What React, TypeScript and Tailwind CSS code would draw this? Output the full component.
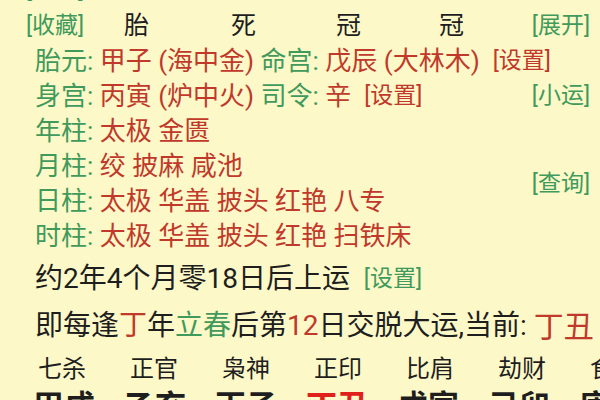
import React from "react";

const G = "text-[#3f9a5c]";
const R = "text-[#c0392b]";

export default function App() {
  return (
    <div className="w-[600px] h-[400px] overflow-hidden bg-[#fcf8c8] text-[#1e1e1e] font-['Roboto','Noto_Sans_CJK_SC',sans-serif]">
      <div className="-mt-[28px]">
        {/* row0 */}
        <div className={`h-[36px] flex items-center pl-[26px] text-[23px] ${G}`}>[删除]</div>
        {/* row1 */}
        <div className="h-[36px] flex items-center text-[25px]">
          <span className={`pl-[26px] w-[124px] text-[23px] ${G}`}>[收藏]</span>
          <span className="w-[107px]">胎</span>
          <span className="w-[105px]">死</span>
          <span className="w-[103px]">冠</span>
          <span className="flex-1">冠</span>
          <span className={`pr-[10px] text-[23px] ${G}`}>[展开]</span>
        </div>
        {/* row2 */}
        <div className="h-[35px] flex items-center pl-[35px] text-[26px] whitespace-pre">
          <span className={G}>胎元: </span>
          <span className={R}>甲子 (海中金) </span>
          <span className={G}>命宫: </span>
          <span className={R}>戊辰 (大林木)  </span>
          <span className={`text-[23px] ${R}`}>[设置]</span>
        </div>
        {/* row3 */}
        <div className="h-[35px] flex items-center pl-[35px] text-[26px] whitespace-pre">
          <span className={G}>身宫: </span>
          <span className={R}>丙寅 (炉中火) </span>
          <span className={G}>司令: </span>
          <span className={R}>辛  </span>
          <span className={`text-[23px] ${R}`}>[设置]</span>
          <span className="flex-1" />
          <span className={`pr-[10px] text-[23px] ${G}`}>[小运]</span>
        </div>
        {/* rows 4-7 */}
        <div className="flex">
          <div className="flex-1 pl-[35px] text-[26px] whitespace-pre">
            <div className="h-[35px] flex items-center">
              <span className={G}>年柱: </span>
              <span className={R}>太极 金匮</span>
            </div>
            <div className="h-[35px] flex items-center">
              <span className={G}>月柱: </span>
              <span className={R}>绞 披麻 咸池</span>
            </div>
            <div className="h-[35px] flex items-center">
              <span className={G}>日柱: </span>
              <span className={R}>太极 华盖 披头 红艳 八专</span>
            </div>
            <div className="h-[35px] flex items-center">
              <span className={G}>时柱: </span>
              <span className={R}>太极 华盖 披头 红艳 扫铁床</span>
            </div>
          </div>
          <div className={`flex items-center pr-[10px] text-[23px] ${G}`}>[查询]</div>
        </div>
        {/* row8 */}
        <div className="h-[50px] flex items-center pl-[35px] text-[28px] whitespace-pre">
          <span>约2年4个月零18日后上运  </span>
          <span className={`text-[23px] ${G}`}>[设置]</span>
        </div>
        {/* row9 */}
        <div className="h-[44px] flex items-center pl-[35px] text-[28px] whitespace-pre">
          <span>即每逢</span>
          <span className={R}>丁</span>
          <span>年</span>
          <span className={G}>立春</span>
          <span>后第</span>
          <span className={R}>12</span>
          <span>日交脱大运,当前: </span>
          <span className={`text-[30px] ${R}`}>丁丑</span>
        </div>
        {/* row10 */}
        <div className="h-[42px] flex items-center pl-[38px] text-[24px] whitespace-nowrap">
          {["七杀", "正官", "枭神", "正印", "比肩", "劫财", "食神"].map((t) => (
            <span key={t} className="w-[92px] shrink-0">{t}</span>
          ))}
        </div>
        {/* row11 */}
        <div className="h-[40px] flex items-start pl-[33px] text-[31px] font-bold leading-none pt-[1px] whitespace-nowrap">
          {["甲戌", "乙亥", "丙子", "丁丑", "戊寅", "己卯", "庚辰"].map((t) => (
            <span key={t} className={`w-[91px] shrink-0 ${t === "丁丑" ? "text-[#e0201a]" : ""}`}>{t}</span>
          ))}
        </div>
      </div>
    </div>
  );
}
